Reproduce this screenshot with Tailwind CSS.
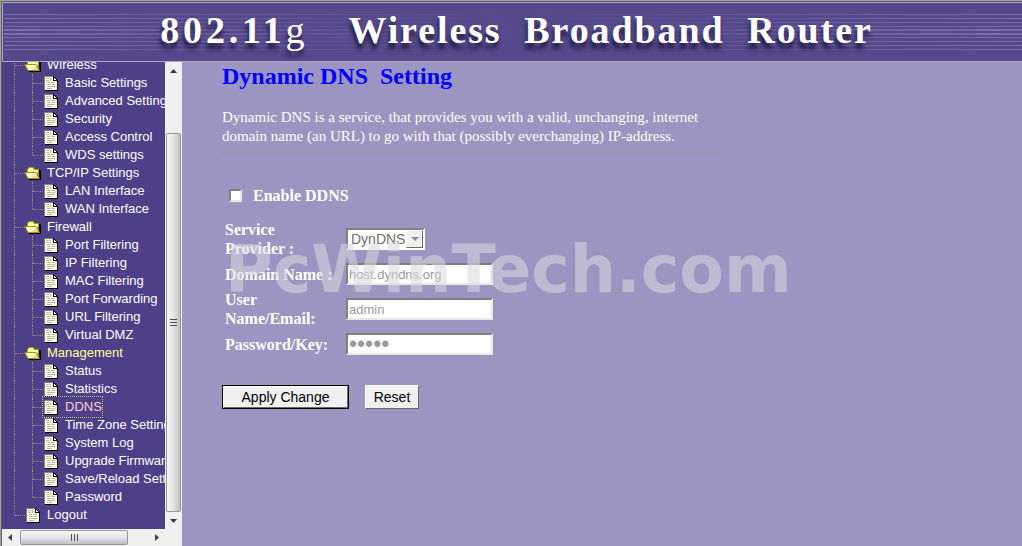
<!DOCTYPE html>
<html lang="en">
<head>
    <meta charset="UTF-8">
    <meta name="viewport" content="width=device-width, initial-scale=1.0">
    <title>802.11g Wireless Broadband Router</title>
    <script src="https://cdn.jsdelivr.net/npm/@tailwindcss/browser@4"></script>
</head>
<body class="h-screen flex flex-col overflow-hidden border-t border-l border-[#a0a0a0] bg-[#9c95c1] font-['Liberation_Serif',serif] text-white">

    <!-- Shared icons -->
    <svg class="hidden">
        <symbol id="doc" viewBox="0 0 14 15">
            <path d="M0 0h8l5 5v9H0z" fill="#ffffe1"/>
            <path d="M0 0h9v1H1v13H0z" fill="#808080"/>
            <path d="M9 0h1v1h1v1h1v1h1v1h1v11H1v-1h12V5H9z" fill="#000"/>
            <path d="M10 2h1v1h1v1h-2z" fill="#fff"/>
            <path d="M2 2.500h3M6.500 2v3M2 4.500h3M3 6.500h3M7 6.500h4M3 8.500h4M8 8.500h3M3 10.500h8M3 12.500h5" stroke="#b4b4b0" fill="none"/>
        </symbol>
        <symbol id="folder" viewBox="0 0 16 13">
            <path d="M3 3h13v10H4z" fill="#000"/>
            <path d="M2 2l2-2h4l2 2h4v10H3L2 7z" fill="#9c9c00"/>
            <path d="M3 2.500L4.500 1h3L9.500 3H13v3H3z" fill="#ffff9c"/>
            <path d="M0 5h11l1 1h1l2 6H3L1 9z" fill="#9c9c00"/>
            <path d="M1 6h10l2 5H4L2 9z" fill="#ffffce"/>
            <path d="M6 11l5-4 2 4z" fill="#ffce9c"/>
        </symbol>
    </svg>

    <!-- Header -->
    <header class="relative h-[61px] shrink-0 border-t border-l border-[#5f5f5f]">
        <div class="h-full border-t border-l border-b border-[#a9a4c9] bg-[#55498b] flex items-center justify-center pb-[4px] pl-[8px]">
            <svg class="absolute left-[2px] top-[12px] w-full h-[38px]" aria-hidden="true">
                <defs>
                    <linearGradient id="fade" gradientUnits="userSpaceOnUse" x1="0" x2="100%" y1="0" y2="0">
                        <stop offset="0" stop-color="#9c95c1" stop-opacity=".5"/>
                        <stop offset=".15" stop-color="#9c95c1" stop-opacity=".3"/>
                        <stop offset=".5" stop-color="#9c95c1" stop-opacity="0"/>
                        <stop offset=".65" stop-color="#9c95c1" stop-opacity=".1"/>
                        <stop offset=".9" stop-color="#9c95c1" stop-opacity=".4"/>
                        <stop offset="1" stop-color="#9c95c1" stop-opacity=".5"/>
                    </linearGradient>
                </defs>
                <g fill="url(#fade)">
                    <rect y="0" width="100%" height="1"/>
                    <rect y="4" width="100%" height="1"/>
                    <rect y="8" width="100%" height="1"/>
                    <rect y="12" width="100%" height="1"/>
                    <rect y="15" width="100%" height="2"/>
                    <rect y="19" width="100%" height="2"/>
                    <rect y="23" width="100%" height="1"/>
                    <rect y="27" width="100%" height="1"/>
                    <rect y="31" width="100%" height="1"/>
                    <rect y="35" width="100%" height="1"/>
                </g>
            </svg>
            <h1 class="relative text-[38px] leading-[54px] font-bold tracking-wider whitespace-pre [text-shadow:-1px_6px_4px_#251b45]"><span class="tracking-widest mr-[18px]">802.11<span class="font-normal">g</span></span>  Wireless  Broadband  Router</h1>
        </div>
    </header>

    <div class="flex flex-1 min-h-0">

        <!-- Sidebar -->
        <aside class="w-[181px] shrink-0 border-l border-[#5f5f5f] flex flex-col bg-[#f0f0f0]">
            <div class="flex flex-1 min-h-0">
                <nav class="flex-1 min-w-0 overflow-hidden bg-[#4d4088] flex flex-col justify-end pb-[5px] pl-[12px] font-['Liberation_Sans',sans-serif] text-[13px]">
                    <ul id="menu"></ul>
                </nav>
                <!-- Vertical scrollbar -->
                <div class="w-[17px] shrink-0 flex flex-col items-center">
                    <svg class="w-[17px] h-[17px]" viewBox="0 0 17 17"><path d="M5 11l3.500-4 3.500 4z" fill="#404040"/></svg>
                    <div class="w-[15px] flex-1 mt-[54px] rounded-xs border border-[#979797] bg-linear-to-r from-[#f5f5f5] via-[#e4e4e6] to-[#c0c0c4] flex flex-col items-center justify-center gap-[2px]">
                        <i class="w-[7px] h-px bg-[#505050]"></i>
                        <i class="w-[7px] h-px bg-[#505050]"></i>
                        <i class="w-[7px] h-px bg-[#505050]"></i>
                    </div>
                    <svg class="w-[17px] h-[17px]" viewBox="0 0 17 17"><path d="M5 7h7l-3.500 4z" fill="#404040"/></svg>
                </div>
            </div>
            <!-- Horizontal scrollbar -->
            <div class="h-[17px] shrink-0 flex items-center pr-[17px]">
                <svg class="w-[18px] h-[17px]" viewBox="0 0 18 17"><path d="M10 5v7L6 8.500z" fill="#404040"/></svg>
                <div class="w-[108px] h-[15px] rounded-xs border border-[#979797] bg-linear-to-b from-[#f5f5f5] via-[#e4e4e6] to-[#c0c0c4] flex items-center justify-center gap-[2px]">
                    <i class="w-px h-[7px] bg-[#505050]"></i>
                    <i class="w-px h-[7px] bg-[#505050]"></i>
                    <i class="w-px h-[7px] bg-[#505050]"></i>
                </div>
                <svg class="w-[18px] h-[17px] ml-auto" viewBox="0 0 18 17"><path d="M8 5v7l4-3.500z" fill="#404040"/></svg>
            </div>
        </aside>

        <!-- Content -->
        <main class="relative flex-1 min-w-0 pl-[40px]">
            <h2 class="text-[24px] leading-[28px] font-bold text-[#0000ff] whitespace-pre">Dynamic DNS  Setting</h2>
            <div class="max-w-[500px]">
                <p class="mt-[18px] text-[15px] leading-[19px]">Dynamic DNS is a service, that provides you with a valid, unchanging, internet domain name (an URL) to go with that (possibly everchanging) IP-address.</p>
                <hr class="mt-[6px] border-t-2 border-[#9a989f]">
            </div>

            <form class="text-[16px] leading-[19px] font-bold">
                <div class="flex items-center mt-[32px] pl-[7px] gap-[11px]">
                    <input type="checkbox" id="enable" class="appearance-none w-[13px] h-[13px] bg-white border-2 border-t-[#808080] border-l-[#808080] border-r-[#e8e8e8] border-b-[#e8e8e8]">
                    <label for="enable">Enable DDNS</label>
                </div>

                <table class="mt-[13px] ml-[3px]">
                    <tbody>
                        <tr class="h-[42px]">
                            <td class="w-[121px]"><label for="provider">Service<br>Provider :</label></td>
                            <td>
                                <div class="relative w-[79px]">
                                    <select id="provider" disabled class="block appearance-none w-full h-[22px] pl-[3px] bg-white border-2 border-t-[#808080] border-l-[#808080] border-r-white border-b-white font-['Liberation_Sans',sans-serif] font-normal text-[14px] leading-[16px] text-[#6d6d6d] opacity-100">
                                        <option>DynDNS</option>
                                    </select>
                                    <span class="absolute right-[2px] top-[2px] w-[17px] h-[18px] bg-[#f0f0f0] border border-t-white border-l-white border-r-[#696969] border-b-[#696969] flex items-center justify-center pointer-events-none">
                                        <svg class="w-[8px] h-[4px]" viewBox="0 0 8 4"><path d="M0 0h8L4 4z" fill="#8c8c8c"/></svg>
                                    </span>
                                </div>
                            </td>
                        </tr>
                        <tr class="h-[28px]">
                            <td><label for="domain">Domain Name :</label></td>
                            <td><input id="domain" type="text" value="host.dyndns.org" disabled class="block w-[147px] h-[22px] px-px bg-white border-2 border-t-[#808080] border-l-[#808080] border-r-[#e8e8e8] border-b-[#e8e8e8] font-['Liberation_Sans',sans-serif] font-normal text-[13px] text-[#999999]"></td>
                        </tr>
                        <tr class="h-[42px]">
                            <td><label for="user">User<br>Name/Email:</label></td>
                            <td><input id="user" type="text" value="admin" disabled class="block w-[147px] h-[22px] px-px bg-white border-2 border-t-[#808080] border-l-[#808080] border-r-[#e8e8e8] border-b-[#e8e8e8] font-['Liberation_Sans',sans-serif] font-normal text-[13px] text-[#999999]"></td>
                        </tr>
                        <tr class="h-[28px]">
                            <td><label for="key">Password/Key:</label></td>
                            <td><input id="key" type="password" value="admin" disabled class="block w-[147px] h-[22px] px-px bg-white border-2 border-t-[#808080] border-l-[#808080] border-r-[#e8e8e8] border-b-[#e8e8e8] font-['Liberation_Sans',sans-serif] font-normal text-[23px] text-[#999999]"></td>
                        </tr>
                    </tbody>
                </table>

                <div class="flex mt-[27px] gap-[16px] font-['Liberation_Sans',sans-serif] font-normal text-[14px] leading-[16px] text-black">
                    <div class="border border-black">
                        <button type="submit" class="block w-[125px] h-[22px] bg-[#f0f0f0] border border-t-white border-l-white border-r-[#696969] border-b-[#696969]">Apply Change</button>
                    </div>
                    <button type="reset" class="w-[54px] h-[24px] bg-[#f0f0f0] border border-t-white border-l-white border-r-[#696969] border-b-[#696969]">Reset</button>
                </div>
            </form>

            <!-- Watermark -->
            <div class="absolute left-[43px] top-[170px] font-['DejaVu_Sans',sans-serif] font-bold text-[65px] leading-[76px] text-[#d8d8df]/55 pointer-events-none">PcWinTech.com</div>
        </main>
    </div>

    <script>
        // Menu tree
        const menu = [
            { label: 'Wireless', items: ['Basic Settings', 'Advanced Settings', 'Security', 'Access Control', 'WDS settings'] },
            { label: 'TCP/IP Settings', items: ['LAN Interface', 'WAN Interface'] },
            { label: 'Firewall', items: ['Port Filtering', 'IP Filtering', 'MAC Filtering', 'Port Forwarding', 'URL Filtering', 'Virtual DMZ'] },
            { label: 'Management', open: true, items: ['Status', 'Statistics', 'DDNS', 'Time Zone Setting', 'System Log', 'Upgrade Firmware', 'Save/Reload Settings', 'Password'] },
            { label: 'Logout' }
        ];
        const current = 'DDNS';

        // Dotted connector cell, the last entry of a branch only goes half way down
        function line(last) {
            const height = last ? 'h-[9px]' : 'h-[18px]';
            return `<span class="w-px shrink-0 ${height} self-start border-l border-dotted border-[#9a9378]"></span>`;
        }
        const dash = '<span class="w-[10px] shrink-0 border-t border-dotted border-[#9a9378]"></span>';

        document.getElementById('menu').innerHTML = menu.map((group, g) => {
            const lastGroup = g === menu.length - 1;
            const icon = group.items
                ? '<svg class="w-[16px] h-[13px] shrink-0"><use href="#folder"/></svg>'
                : '<svg class="w-[14px] h-[15px] mx-px shrink-0"><use href="#doc"/></svg>';
            const color = group.open ? 'text-[#ffff99]' : 'text-white';
            const children = (group.items || []).map((item, i) => `
                <li class="flex items-center h-[18px] whitespace-nowrap">
                    ${line(false)}<span class="w-[17px] shrink-0"></span>${line(i === group.items.length - 1)}${dash}
                    <a href="#" class="flex items-center shrink-0 pl-px ${item === current ? 'text-[#ffcccc] outline-1 outline-dotted outline-[#c8c070]' : ''}">
                        <svg class="w-[14px] h-[15px] mr-[7px] shrink-0"><use href="#doc"/></svg>${item}
                    </a>
                </li>`).join('');
            return `
                <li>
                    <div class="flex items-center h-[18px] whitespace-nowrap">
                        ${line(lastGroup)}${dash}
                        <a href="#" class="flex items-center gap-[6px] ${color}">${icon}${group.label}</a>
                    </div>
                    ${children ? `<ul>${children}</ul>` : ''}
                </li>`;
        }).join('');
    </script>

</body>
</html>
